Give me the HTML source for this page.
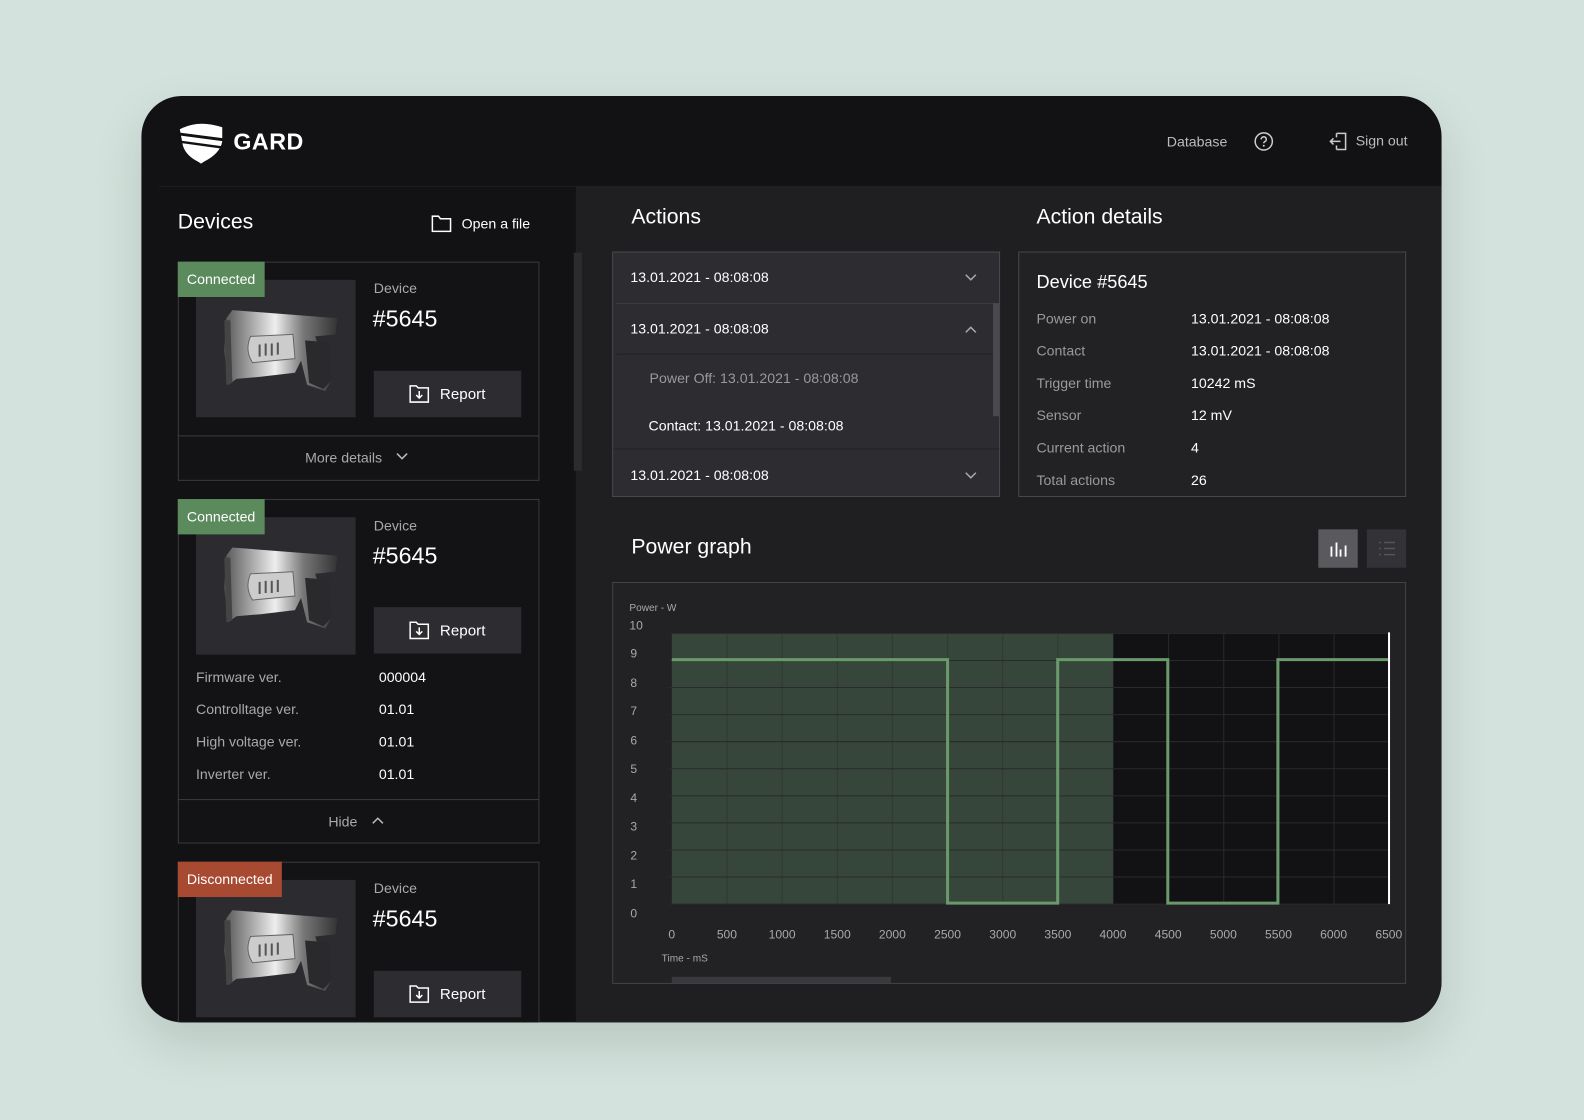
<!DOCTYPE html>
<html><head><meta charset="utf-8"><style>
*{margin:0;padding:0;box-sizing:border-box}
body{width:1584px;height:1120px;background:#d3e2dc;font-family:"Liberation Sans",sans-serif;position:relative;overflow:hidden}
#wrap{position:absolute;left:0;top:0;width:1568px;height:1109px;transform:scale(1.0102);transform-origin:0 0}
#frame{position:absolute;left:140px;top:95px;width:1287px;height:917px;border-radius:40px;overflow:hidden;background:#121114;box-shadow:0 20px 50px rgba(0,0,0,.12)}
.f{position:absolute}
.t{color:#fff;white-space:nowrap}
.g{color:#a9a8ac;white-space:nowrap}
.card{position:absolute;border:1px solid #3b3a3e;background:#131215}
.badge{position:absolute;color:#fff;font-size:14px;line-height:35px;padding:0 9px}
.img{position:absolute;background:#2c2b2f}
.btn{position:absolute;background:#2d2c30;color:#fff;font-size:15px;display:flex;align-items:center;justify-content:center;gap:10px}
</style></head><body>
<div id="wrap">
<div id="frame">
<div class="f" style="left:17px;top:89px;width:1270px;height:1px;background:#1e1d20"></div>
<div class="f" style="left:430px;top:89px;width:857px;height:828px;background:#1f1e21"></div>
<svg class="f" style="left:36px;top:25px" width="46" height="42" viewBox="0 0 46 42">
<path d="M2 8 Q20 -2 44 6 L44 20 Q42 32 26 40 L23 42 L20 40 Q8 34 5 24 Z" fill="#fff"/>
<path d="M0 11 L46 17 L46 20 L1 14 Z" fill="#121114"/>
<path d="M1 19 L46 25 L46 27.5 L3 21.5 Z" fill="#121114"/>
</svg>
<div class="f t" style="left:91px;top:32px;font-size:23px;font-weight:bold;letter-spacing:.5px">GARD</div>
<div class="f g" style="left:1015px;top:37px;font-size:14px;color:#bbb">Database</div>
<svg class="f" style="left:1101px;top:35px" width="20" height="20" viewBox="0 0 20 20"><circle cx="10" cy="10" r="8.5" fill="none" stroke="#ccc" stroke-width="1.5"/><path d="M7.5 8a2.5 2.5 0 1 1 3.5 2.2c-.8.4-1 .8-1 1.6" fill="none" stroke="#ccc" stroke-width="1.5"/><circle cx="10" cy="14.3" r="1" fill="#ccc"/></svg>
<svg class="f" style="left:1175px;top:35px" width="20" height="20" viewBox="0 0 20 20"><path d="M8 2 H17 V18 H8 M8 2 V6 M8 14 V18" fill="none" stroke="#ccc" stroke-width="1.5"/><path d="M12 10 H2 M5 7 L2 10 L5 13" fill="none" stroke="#ccc" stroke-width="1.5"/></svg>
<div class="f g" style="left:1202px;top:36px;font-size:14px;color:#bbb">Sign out</div>

<div class="f t" style="left:36px;top:113px;font-size:21px">Devices</div>
<svg class="f" style="left:287px;top:118px" width="20" height="17" viewBox="0 0 20 17"><path d="M1 1 H7 L9 3.5 H19 V16 H1 Z" fill="none" stroke="#fff" stroke-width="1.5"/></svg>
<div class="f t" style="left:317px;top:118px;font-size:14px">Open a file</div>
<div class="f" style="left:428px;top:155px;width:8px;height:216px;background:#2c2b2e"></div>

<div class="card" style="left:36px;top:164px;width:358px;height:217px"></div>
<div class="f" style="left:36px;top:336px;width:358px;height:1px;background:#3b3a3e"></div>
<div class="img gun" style="left:54px;top:182px;width:158px;height:136px"></div>
<div class="badge" style="left:36px;top:164px;background:#5b8a5d">Connected</div>
<div class="f g" style="left:230px;top:182px;font-size:14px">Device</div>
<div class="f t" style="left:229px;top:207px;font-size:23px">#5645</div>
<div class="btn rep" style="left:230px;top:272px;width:146px;height:46px"></div>
<div class="f g" style="left:162px;top:350px;font-size:14px">More details</div>
<svg class="f" style="left:252px;top:353px" width="12" height="8"><path d="M1 1 L6 6 L11 1" fill="none" stroke="#bbb" stroke-width="1.5"/></svg>

<div class="card" style="left:36px;top:399px;width:358px;height:341px"></div>
<div class="f" style="left:36px;top:696px;width:358px;height:1px;background:#3b3a3e"></div>
<div class="img gun" style="left:54px;top:417px;width:158px;height:136px"></div>
<div class="badge" style="left:36px;top:399px;background:#5b8a5d">Connected</div>
<div class="f g" style="left:230px;top:417px;font-size:14px">Device</div>
<div class="f t" style="left:229px;top:442px;font-size:23px">#5645</div>
<div class="btn rep" style="left:230px;top:506px;width:146px;height:46px"></div>
<div class="f g" style="left:54px;top:567px;font-size:14px">Firmware ver.</div><div class="f t" style="left:235px;top:567px;font-size:14px">000004</div>
<div class="f g" style="left:54px;top:599px;font-size:14px">Controlltage ver.</div><div class="f t" style="left:235px;top:599px;font-size:14px">01.01</div>
<div class="f g" style="left:54px;top:631px;font-size:14px">High voltage ver.</div><div class="f t" style="left:235px;top:631px;font-size:14px">01.01</div>
<div class="f g" style="left:54px;top:663px;font-size:14px">Inverter ver.</div><div class="f t" style="left:235px;top:663px;font-size:14px">01.01</div>
<div class="f g" style="left:185px;top:710px;font-size:14px">Hide</div>
<svg class="f" style="left:228px;top:713px" width="12" height="8"><path d="M1 7 L6 2 L11 7" fill="none" stroke="#bbb" stroke-width="1.5"/></svg>

<div class="card" style="left:36px;top:758px;width:358px;height:200px"></div>
<div class="img gun" style="left:54px;top:776px;width:158px;height:136px"></div>
<div class="badge" style="left:36px;top:758px;background:#a84a32">Disconnected</div>
<div class="f g" style="left:230px;top:776px;font-size:14px">Device</div>
<div class="f t" style="left:229px;top:801px;font-size:23px">#5645</div>
<div class="btn rep" style="left:230px;top:866px;width:146px;height:46px"></div>

<div class="f t" style="left:485px;top:108px;font-size:21px">Actions</div>
<div class="f" style="left:466px;top:154px;width:384px;height:243px;background:#2d2c30;border:1px solid #4a494d"></div>
<div class="f" style="left:470px;top:205px;width:373px;height:1px;background:#3f3e42"></div>
<div class="f" style="left:470px;top:255px;width:373px;height:1px;background:#232225"></div>
<div class="f" style="left:467px;top:349px;width:382px;height:1px;background:#232225"></div>
<div class="f" style="left:843px;top:205px;width:6px;height:112px;background:#4a494d"></div>
<div class="f t" style="left:484px;top:171px;font-size:14px">13.01.2021 - 08:08:08</div>
<div class="f t" style="left:484px;top:222px;font-size:14px">13.01.2021 - 08:08:08</div>
<div class="f g" style="left:503px;top:271px;font-size:14px;color:#999">Power Off: 13.01.2021 - 08:08:08</div>
<div class="f t" style="left:502px;top:318px;font-size:14px">Contact: 13.01.2021 - 08:08:08</div>
<div class="f t" style="left:484px;top:367px;font-size:14px">13.01.2021 - 08:08:08</div>
<svg class="f" style="left:815px;top:176px" width="12" height="8"><path d="M1 1 L6 6 L11 1" fill="none" stroke="#aaa" stroke-width="1.5"/></svg>
<svg class="f" style="left:815px;top:227px" width="12" height="8"><path d="M1 7 L6 2 L11 7" fill="none" stroke="#aaa" stroke-width="1.5"/></svg>
<svg class="f" style="left:815px;top:372px" width="12" height="8"><path d="M1 1 L6 6 L11 1" fill="none" stroke="#aaa" stroke-width="1.5"/></svg>

<div class="f t" style="left:886px;top:108px;font-size:21px">Action details</div>
<div class="f" style="left:868px;top:154px;width:384px;height:243px;background:#222124;border:1px solid #48474b"></div>
<div class="f t" style="left:886px;top:174px;font-size:18px">Device #5645</div>
<div class="f g" style="left:886px;top:212px;font-size:14px;color:#9a999d">Power on</div><div class="f t" style="left:1039px;top:212px;font-size:14px">13.01.2021 - 08:08:08</div>
<div class="f g" style="left:886px;top:244px;font-size:14px;color:#9a999d">Contact</div><div class="f t" style="left:1039px;top:244px;font-size:14px">13.01.2021 - 08:08:08</div>
<div class="f g" style="left:886px;top:276px;font-size:14px;color:#9a999d">Trigger time</div><div class="f t" style="left:1039px;top:276px;font-size:14px">10242 mS</div>
<div class="f g" style="left:886px;top:308px;font-size:14px;color:#9a999d">Sensor</div><div class="f t" style="left:1039px;top:308px;font-size:14px">12 mV</div>
<div class="f g" style="left:886px;top:340px;font-size:14px;color:#9a999d">Current action</div><div class="f t" style="left:1039px;top:340px;font-size:14px">4</div>
<div class="f g" style="left:886px;top:372px;font-size:14px;color:#9a999d">Total actions</div><div class="f t" style="left:1039px;top:372px;font-size:14px">26</div>

<div class="f t" style="left:485px;top:435px;font-size:21px">Power graph</div>
<div class="f" style="left:1165px;top:429px;width:39px;height:38px;background:#5a595d"></div>
<svg class="f" style="left:1175px;top:438px" width="20" height="20"><path d="M3 8V18 M8 4V18 M12 11V18 M17 7V18" stroke="#fff" stroke-width="1.8"/></svg>
<div class="f" style="left:1213px;top:429px;width:39px;height:38px;background:#333236"></div>
<svg class="f" style="left:1223px;top:440px" width="20" height="16"><path d="M2 2h2M2 8h2M2 14h2M7 2h11M7 8h11M7 14h11" stroke="#555458" stroke-width="1.5"/></svg>

<svg class="f" style="left:466px;top:481px" width="786" height="398" viewBox="0 0 786 398">
<rect x="0.5" y="0.5" width="785" height="397" fill="#222124" stroke="#48474b"/>
<rect x="496" y="51" width="273" height="268" fill="#121114"/>
<rect x="59" y="51" width="437" height="268" fill="#36463a"/>
<g stroke="#2f3a31" stroke-width="1">
<path d="M113.6 51V319M168.2 51V319M222.8 51V319M277.4 51V319M332 51V319M386.6 51V319M441.2 51V319"/>
</g>
<g stroke="#2a292d" stroke-width="1">
<path d="M550.8 51V319M605.4 51V319M660 51V319M714.6 51V319"/>
<path d="M55 51H769M55 77.8H769M55 104.6H769M55 131.4H769M55 158.2H769M55 185H769M55 211.8H769M55 238.6H769M55 265.4H769M55 292.2H769M55 319H769"/>
</g>
<path d="M59 77 H332 V318 H441 V77 H550 V318 H659 V77 H769" fill="none" stroke="#6a9a6c" stroke-width="3"/>
<path d="M769 50V319" stroke="#fff" stroke-width="2"/>
<g fill="#a9a8ac" font-size="12" font-family="Liberation Sans">
<text x="17" y="29" font-size="10">Power - W</text>
<text x="17" y="47">10</text><text x="18" y="75">9</text><text x="18" y="104">8</text><text x="18" y="132">7</text><text x="18" y="161">6</text><text x="18" y="189">5</text><text x="18" y="218">4</text><text x="18" y="246">3</text><text x="18" y="275">2</text><text x="18" y="303">1</text><text x="18" y="332">0</text>
<g text-anchor="middle">
<text x="59" y="353">0</text><text x="113.6" y="353">500</text><text x="168.2" y="353">1000</text><text x="222.8" y="353">1500</text><text x="277.4" y="353">2000</text><text x="332" y="353">2500</text><text x="386.6" y="353">3000</text><text x="441.2" y="353">3500</text><text x="495.8" y="353">4000</text><text x="550.4" y="353">4500</text><text x="605" y="353">5000</text><text x="659.6" y="353">5500</text><text x="714.2" y="353">6000</text><text x="768.8" y="353">6500</text>
</g>
<text x="49" y="376" font-size="10">Time - mS</text>
</g>
<rect x="59" y="391" width="217" height="6" fill="#3a393d"/>
</svg>
</div>
</div>
<script>
var gun='<svg width="158" height="136" viewBox="0 0 158 136"><defs><linearGradient id="gg" x1="0" x2="1"><stop offset="0" stop-color="#555"/><stop offset=".45" stop-color="#eee"/><stop offset=".7" stop-color="#777"/><stop offset="1" stop-color="#333"/></linearGradient></defs>'+
'<path d="M30 38 L36 30 L140 38 L138 54 L118 56 L120 62 L134 100 L128 110 L110 104 L104 80 L98 92 L64 96 L40 98 L32 104 L28 70 Z" fill="url(#gg)"/>'+
'<path d="M108 60 L132 62 L134 100 L126 108 L112 102 Z" fill="#2a2a2c"/>'+
'<path d="M54 56 L96 54 L98 78 L56 82 Q48 70 54 56Z" fill="#ccc" stroke="#666"/>'+
'<path d="M62 64h2v12h-2M68 63h2v12h-2M74 63h2v12h-2M80 62h2v12h-2" fill="#555"/>'+
'<path d="M28 40 L34 40 L36 102 L30 104 Z" fill="#444"/></svg>';
var rep='<svg width="20" height="18" viewBox="0 0 20 18"><path d="M1 1 H7 L9 3 H19 V17 H1 Z" fill="none" stroke="#fff" stroke-width="1.5"/><path d="M10 6 V13 M7 10 L10 13 L13 10" fill="none" stroke="#fff" stroke-width="1.5"/></svg><span>Report</span>';
document.querySelectorAll('.gun').forEach(function(e){e.innerHTML=gun});
document.querySelectorAll('.rep').forEach(function(e){e.innerHTML=rep});
</script>
</body></html>
